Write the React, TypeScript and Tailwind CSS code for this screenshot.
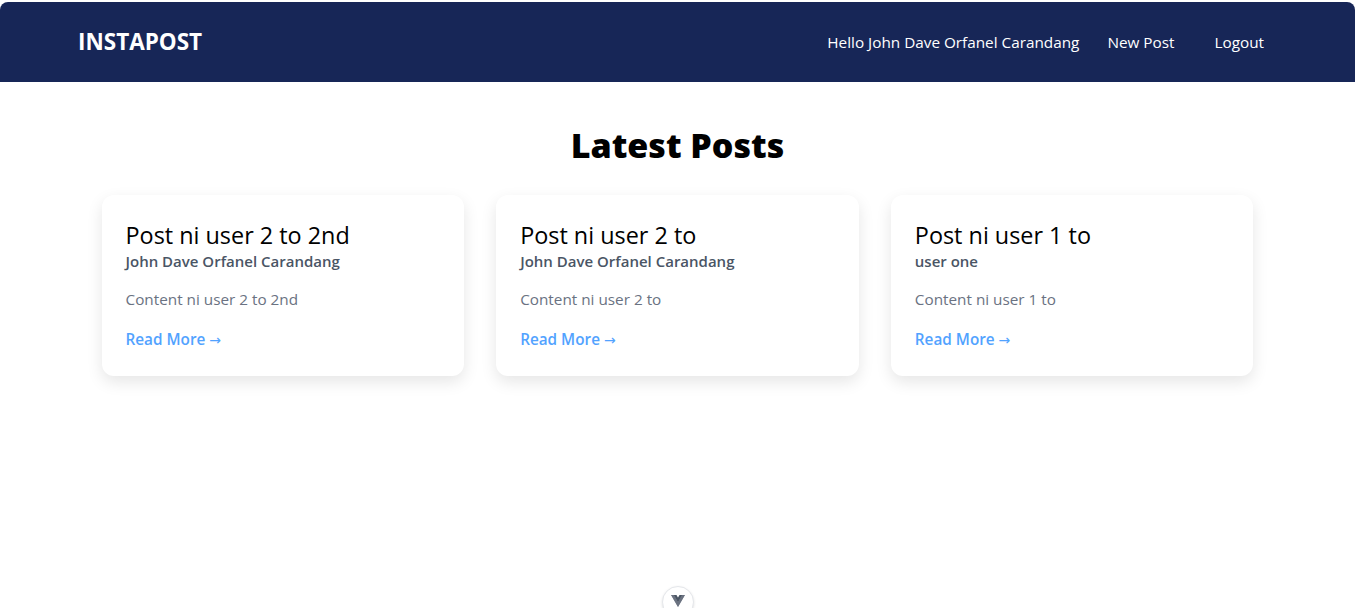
import React from 'react';

const POSTS = [
  { id: 3, title: 'Post ni user 2 to 2nd', author: 'John Dave Orfanel Carandang', content: 'Content ni user 2 to 2nd' },
  { id: 2, title: 'Post ni user 2 to', author: 'John Dave Orfanel Carandang', content: 'Content ni user 2 to' },
  { id: 1, title: 'Post ni user 1 to', author: 'user one', content: 'Content ni user 1 to' },
];

function PostCard({ title, author, content }: { title: string; author: string; content: string }) {
  return (
    <div className="bg-white rounded-xl p-6 shadow-[0_6px_16px_rgba(0,0,0,0.1)]">
      <h2 className="text-[23.4px] leading-8 text-black">{title}</h2>
      <p className="text-[15px] leading-5 font-semibold text-gray-600">{author}</p>
      <p className="mt-4 text-[15.3px] leading-6 text-gray-500">{content}</p>
      <a href="#" className="mt-4 block text-[15.3px] leading-6 font-semibold text-blue-400">
        Read More <span className="font-['DejaVu_Sans',sans-serif] font-normal text-[14px]">→</span>
      </a>
    </div>
  );
}

export default function App() {
  return (
    <div className="min-h-[608px] bg-white relative font-['Open_Sans',sans-serif] overflow-hidden">
      {/* Top nav */}
      <div className="pt-[2px]">
        <nav className="h-20 bg-[#172657] rounded-t-lg flex items-center justify-between pl-[78px] pr-[91px] text-white">
          <span className="text-[22.5px] font-bold">INSTAPOST</span>
          <div className="flex items-center text-[15.3px]">
            <span>Hello John Dave Orfanel Carandang</span>
            <a href="#" className="ml-7">New Post</a>
            <a href="#" className="ml-10">Logout</a>
          </div>
        </nav>
      </div>

      {/* Main */}
      <main className="pt-[43px]">
        <h1 className="text-center text-[34px] leading-10 font-black text-black">Latest Posts</h1>
        <div className="mt-[30px] max-w-6xl mx-auto grid grid-cols-3 gap-8">
          {POSTS.map((p) => (
            <PostCard key={p.id} title={p.title} author={p.author} content={p.content} />
          ))}
        </div>
      </main>

      {/* floating devtools toggle */}
      <div className="absolute left-1/2 -translate-x-1/2 top-[586px] w-[32px] h-[32px] rounded-full bg-white border border-gray-200 shadow-sm flex justify-center pt-[8px]">
        <svg width="14" height="12" viewBox="0 0 256 221">
          <path d="M204.8 0H256L128 220.8 0 0h97.92L128 51.2 157.44 0h47.36Z" fill="#9ca3af" />
          <path d="M0 0l128 220.8L256 0h-51.2L128 132.48 50.56 0H0Z" fill="#6b7280" />
          <path d="M50.56 0L128 133.12 204.8 0h-47.36L128 51.2 97.92 0H50.56Z" fill="#4b5563" />
        </svg>
      </div>
    </div>
  );
}
